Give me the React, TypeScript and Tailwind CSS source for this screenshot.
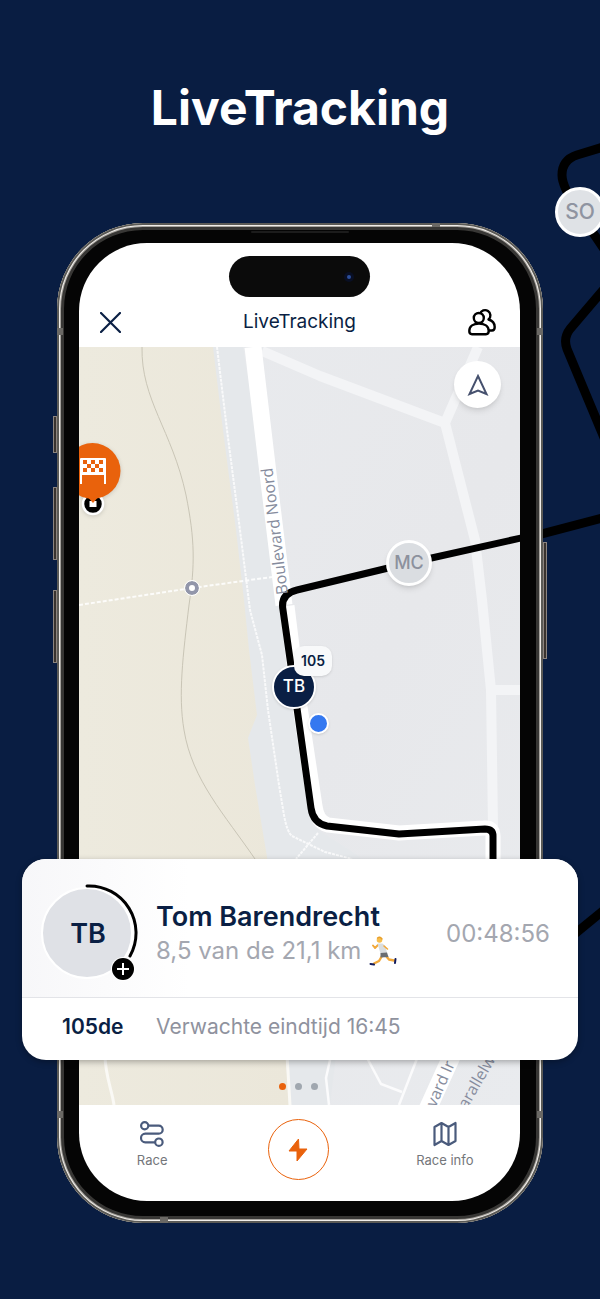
import React from "react";

const font = 'font-[Inter,"Liberation_Sans",sans-serif]';

function CourseBackdrop() {
  return (
    <svg
      aria-hidden="true"
      className="pointer-events-none absolute right-0 top-0 h-[1299px] w-[60px]"
      viewBox="540 0 60 1299"
      fill="none"
      stroke="#000"
      strokeWidth="9"
      strokeLinejoin="round"
    >
      <path d="M610 145 L577 155 Q562 160 562 175 Q562 187 579 212 L610 258" />
      <path d="M610 282 L570 329 Q563 338 567 349 L610 452" />
      <path d="M530 537 L610 516" />
      <path d="M560 946 L610 905" />
    </svg>
  );
}

function MapCanvas() {
  return (
    <svg
      aria-hidden="true"
      className="absolute inset-0 h-full w-full"
      viewBox="79 347 441 758"
      preserveAspectRatio="xMidYMid slice"
      fill="none"
    >
      <defs>
        <linearGradient id="land" x1="0" y1="0" x2="1" y2="1">
          <stop offset="0" stopColor="#e9ebee" />
          <stop offset="0.55" stopColor="#e7e8eb" />
          <stop offset="1" stopColor="#e9ebee" />
        </linearGradient>
        <linearGradient id="sand" x1="0" y1="0" x2="1" y2="0">
          <stop offset="0" stopColor="#edeade" />
          <stop offset="1" stopColor="#ebe7da" />
        </linearGradient>
      </defs>
      <rect x="79" y="347" width="441" height="758" fill="url(#land)" />
      <path d="M213 347 L243 347 L284 600 L312 826 L360 857 L330 1105 L280 1105 L200 700Z" fill="#e5e8eb" />
      <path d="M79 347 H213 L223 430 L236 530 L244 600 L249 650 L257 715 L248 738 L255 785 L267 857 L286 1060 L289 1105 H79Z" fill="url(#sand)" />
      <path d="M142 347 C141 400 172 430 186 495 C195 540 195 565 189 605 C183 655 178 695 184 730 C192 780 225 815 255 859" stroke="#c9c5b6" />
      <path d="M79 605 L192 588 L272 577" stroke="#fff" strokeWidth="2" strokeDasharray="4 2" opacity="0.85" />
      <path d="M217 347 L227 430 L240 530 L250 610 L262 655 L268 710 L279 785 L284 815 Q287 832 292 836 L325 852 L352 859 M318 833 L296 859" stroke="#fff" strokeWidth="2" strokeDasharray="3 1" opacity="0.75" />
      <path d="M262 351 L320 376 L445 423 L478 347 M445 423 L475 540 L482 600 L491 690 L493 826 M491 690 H520" stroke="#f3f4f6" strokeWidth="10" strokeLinejoin="round" />
      <path d="M253 347 L270 490 L284 605" stroke="#fff" strokeWidth="17" />
      <path d="M287 606 L297 687 L315 806 Q317 822 328 825 L399 833 L484 828 Q493 827 493 836 V862" stroke="#fff" strokeWidth="15" strokeLinejoin="round" />
      <path d="M530 536 L409 563 L297 590 Q280 594 283 610 L294 687 L311 808 Q313 823 327 826 L399 834 L485 829 Q493 829 493 836 V870" stroke="#000" strokeWidth="7" strokeLinejoin="round" />
      <path d="M105 1055 C105 1075 112 1090 114 1105 M287 1055 L290 1105" stroke="#faf9f5" strokeWidth="3" />
      <path d="M330 1060 L326 1078 L329 1105 M366 1056 L381 1084 L402 1092 M418 1056 L399 1105" stroke="#fbfbfc" strokeWidth="2.5" />
      <path d="M459 1040 L425 1115" stroke="#fff" strokeWidth="18" />
      <g fontFamily='"Open Sans", "Noto Sans", sans-serif' fontWeight="500" fill="#868c9d">
        <text transform="translate(288 594) rotate(-97)" fontSize="16">Boulevard Noord</text>
        <text transform="translate(418 1147) rotate(-66)" fontSize="16">Boulevard Ir</text>
        <text transform="translate(462 1118) rotate(-60)" fontSize="16">Parallelweg</text>
      </g>
      <circle cx="192" cy="588" r="5" fill="#fff" stroke="#9296aa" strokeWidth="4" />
      <circle cx="192" cy="588" r="7.5" stroke="#fff" />
    </svg>
  );
}

function FinishPin() {
  const cells = [0, 1, 2, 3, 4].flatMap((c) => [0, 1, 2].map((r) => [c, r])).filter(([c, r]) => (c + r) % 2 === 0);
  return (
    <svg role="img" aria-label="Finish" className="absolute left-[-18px] top-[92px] h-20 w-16 drop-shadow-sm" viewBox="61 439 64 80">
      <circle cx="93" cy="504" r="10" fill="#000" stroke="#fff" strokeWidth="2.5" />
      <rect x="89.5" y="501" width="7" height="6" fill="#fff" />
      <path d="M86 495 H100 L93 503Z" fill="#e9620c" />
      <circle cx="92.5" cy="471" r="28" fill="#e9620c" />
      <path d="M81 484 V459 M105 484 V459" fill="none" stroke="#fff" strokeWidth="2" />
      <rect x="80" y="458" width="26" height="17" rx="1" fill="#fff" />
      {cells.map(([c, r]) => (
        <rect key={`${c}-${r}`} x={83 + c * 4} y={460 + r * 4} width="4" height="4" fill="#e9620c" />
      ))}
    </svg>
  );
}

function RouteIcon() {
  return (
    <svg aria-hidden="true" className="h-[26px] w-6" viewBox="0 0 24 26" fill="none" stroke="#4a5b7c" strokeWidth="2.2">
      <circle cx="4.7" cy="4.7" r="3.6" />
      <path d="M8.5 4.7H18.7a4 4 0 0 1 0 8H5.3a4.3 4.3 0 0 0 0 8.6H15" />
      <circle cx="18.9" cy="21.2" r="3.7" />
    </svg>
  );
}

function FoldedMapIcon() {
  return (
    <svg aria-hidden="true" className="h-[26px] w-6" viewBox="0 0 24 26" fill="none" stroke="#4a5b7c" strokeWidth="2.2" strokeLinejoin="round">
      <path d="M1.5 6 L8.5 2 L15.5 6 L22.5 2 V20 L15.5 24 L8.5 20 L1.5 24Z M8.5 2V20 M15.5 6V24" />
    </svg>
  );
}

function PeopleIcon() {
  return (
    <svg aria-hidden="true" className="h-7 w-7" viewBox="0 0 28 28" fill="none" stroke="#000" strokeWidth="2.4" strokeLinejoin="round" strokeLinecap="round">
      <path d="M12 6 A5.3 5.3 0 1 1 20.5 11.5 C24 12.5 26.7 15 26.7 19 Q26.7 22.5 24 22.5 H21" />
      <circle cx="10.8" cy="10" r="5" fill="#fff" />
      <path d="M1.3 23 C1.3 18 5.5 15.6 11 15.6 S20.7 18 20.7 23 Q20.7 26.2 18 26.2 H4 Q1.3 26.2 1.3 23Z" fill="#fff" />
    </svg>
  );
}

function Runner() {
  return (
    <svg role="img" aria-label="Hardloper" className="h-[30px] w-7" viewBox="0 0 28 30" fill="none" strokeLinecap="round" strokeLinejoin="round">
      <path d="M9 9 L6 12 L4 9.5" stroke="#f2a93b" strokeWidth="2" />
      <path d="M13 20 L10 25 L5 27.5 M17 20 L20 23.5 L25 24.5" stroke="#f2a93b" strokeWidth="2.4" />
      <path d="M8.5 7.5 L13.5 7.5 L16.5 10 L18 17 L11.5 17.5Z" fill="#d9dde0" />
      <path d="M15 10 L18.5 13" stroke="#f2a93b" strokeWidth="1.6" />
      <path d="M11.5 17 L18 16.5 L19.5 21 L11.5 21.5Z" fill="#6a6d72" />
      <circle cx="10.5" cy="4" r="2.8" fill="#f7bd4c" />
      <path d="M8.5 2 Q11 0 13 3" stroke="#e8a02c" strokeWidth="1.4" />
      <path d="M1.5 28 L5 28.5 M26.5 23 L26 27" stroke="#101a5c" strokeWidth="2" />
    </svg>
  );
}

function RunnerCard() {
  return (
    <article className="absolute inset-x-[-35px] bottom-[163px] z-10 overflow-hidden rounded-3xl bg-white shadow-[0_2px_6px_rgba(0,0,0,0.3)]">
      <div className="flex h-[139px] items-center border-b border-[#e3e4e8] bg-linear-to-r from-[#f7f7f9] to-white to-30% pl-4 pr-7 pt-3">
        <div className="relative mr-[18px] size-[100px] shrink-0">
          <svg aria-hidden="true" className="absolute inset-0 size-full" viewBox="0 0 100 100" fill="none">
            <circle cx="49" cy="49" r="45" fill="#dfe1e6" stroke="#fff" strokeWidth="2" />
            <path d="M49 2 A47 47 0 0 1 92 72" stroke="#000" strokeWidth="3" strokeLinecap="round" />
          </svg>
          <span className="relative flex size-full items-center justify-center text-[27px] font-semibold">TB</span>
          <button aria-label="Volgen" className="absolute bottom-1 right-1 flex size-[22px] items-center justify-center rounded-full bg-black ring-1 ring-white">
            <svg aria-hidden="true" className="size-3" viewBox="0 0 12 12" stroke="#fff" strokeWidth="2"><path d="M6 0V12M0 6H12" /></svg>
          </button>
        </div>
        <div className="min-w-0 flex-1 whitespace-nowrap">
          <h2 className="text-[27px] font-semibold leading-[34px]">Tom Barendrecht</h2>
          <p className="flex items-center gap-2 text-2xl leading-[34px] text-[#a4a7b0]">8,5 van de 21,1 km <Runner /></p>
        </div>
        <time className="text-2xl text-[#a4a7b0]">00:48:56</time>
      </div>
      <div className="flex h-[62px] items-center pb-1">
        <strong className="w-[134px] pl-10 text-[21px] font-semibold">105de</strong>
        <p className="text-[21px] text-[#8f929e]">Verwachte eindtijd 16:45</p>
      </div>
    </article>
  );
}

function PhoneHardware() {
  return (
    <div aria-hidden="true" className="pointer-events-none absolute inset-y-0 -inset-x-1 flex justify-between">
      <div className="flex">
        <div className="flex w-1 flex-col gap-[30px] pt-[193px]">
          <span className="h-[37px] border border-[#8d8580] bg-[#39332f]" />
          <span className="mt-1 h-[73px] border border-[#8d8580] bg-[#39332f]" />
          <span className="h-[73px] border border-[#8d8580] bg-[#39332f]" />
        </div>
        <div className="flex w-1.5 flex-col justify-between py-[105px]">
          <span className="h-[7px] bg-[#6b6965]" />
          <span className="h-[7px] bg-[#6b6965]" />
        </div>
      </div>
      <div className="flex flex-1 flex-col justify-between px-[97px]">
        <span className="h-1 w-2 self-end bg-[#6b6965]" />
        <span className="h-1.5 w-2 self-start bg-[#6b6965]" />
      </div>
      <div className="flex">
        <div className="flex w-1.5 flex-col justify-between py-[105px]">
          <span className="h-[7px] bg-[#6b6965]" />
          <span className="h-[7px] bg-[#6b6965]" />
        </div>
        <div className="flex w-1 flex-col pt-[319px]">
          <span className="h-[117px] border border-[#8d8580] bg-[#39332f]" />
        </div>
      </div>
    </div>
  );
}

export default function App() {
  return (
    <main className={`${font} relative min-h-[1299px] overflow-hidden bg-[#091d42] px-[57px] pb-[76px] text-[#0a1f44]`}>
      <CourseBackdrop />
      <div className="absolute right-[-5px] top-[187px] flex size-[50px] items-center justify-center rounded-full border-[3px] border-white bg-[#dfe2e6] text-[21px] font-medium text-[#8f94a1]">SO</div>
      <h1 className="flex h-[223px] items-center justify-center pb-2 text-5xl font-bold text-white">LiveTracking</h1>
      <div className="relative mx-auto max-w-[486px]">
        <div className="rounded-[86px] bg-[#050505] pb-[22px] pl-[22px] pr-[23px] pt-2 shadow-[inset_0_0_0_2px_#5b5a56,inset_0_0_0_3px_#f1eeea,inset_0_0_0_4px_#a5a29d,inset_0_0_0_7px_#383735]">
          <div aria-hidden="true" className="mx-auto mb-2.5 h-0.5 w-[98px] rounded-full bg-[#1c1c1c]" />
          <section className="overflow-hidden rounded-[68px] bg-white">
            <header className="h-[104px] pt-[13px]">
              <div aria-hidden="true" className="mx-auto flex h-[41px] w-[141px] items-center justify-end rounded-full bg-[#0b0b0b] pr-4">
                <span className="flex size-2.5 items-center justify-center rounded-full bg-[#090f24]"><span className="size-1 rounded-full bg-[#2c4f9b]" /></span>
              </div>
              <div className="mt-2.5 flex h-[30px] items-center justify-between pl-5 pr-6">
                <button aria-label="Sluiten" className="flex h-7 w-8 items-center pl-px">
                  <svg aria-hidden="true" className="size-[21px]" viewBox="0 0 21 21" stroke="#0a1f44" strokeWidth="2.2" strokeLinecap="round"><path d="M1 1L20 20M20 1L1 20" /></svg>
                </button>
                <h2 className="text-[19px]">LiveTracking</h2>
                <button aria-label="Deelnemers"><PeopleIcon /></button>
              </div>
            </header>
            <div className="relative h-[758px] overflow-hidden">
              <MapCanvas />
              <FinishPin />
              <button aria-label="Mijn locatie" className="absolute right-[19px] top-[14px] flex size-[47px] items-center justify-center rounded-full bg-white shadow-md">
                <svg aria-hidden="true" className="size-[22px]" viewBox="0 0 22 22" fill="none" stroke="#46516e" strokeWidth="2"><path d="M11 2L19.5 20L11 16.5L2.5 20Z" /></svg>
              </button>
              <div className="absolute left-[307px] top-[193px] flex size-[46px] items-center justify-center rounded-full border-[3px] border-white bg-[#dadde1] text-lg font-medium text-[#8c919d] shadow-md">MC</div>
              <div className="absolute left-[193px] top-[318px] flex size-11 items-center justify-center rounded-full border-2 border-white bg-[#0a1f44] text-[17px] font-medium text-white shadow">TB</div>
              <div className="absolute left-[215px] top-[299px] flex h-[30px] w-[38px] items-center justify-center rounded-[10px] bg-[#f8f9fa] text-sm font-semibold shadow">105</div>
              <span className="absolute left-[229px] top-[366px] size-[21px] rounded-full border-2 border-white bg-[#3478f0] shadow" />
              <div aria-hidden="true" className="absolute inset-x-0 bottom-[15px] flex justify-center gap-[9px] pr-0.5">
                <span className="size-[7px] rounded-full bg-[#e9620c]" />
                <span className="size-[7px] rounded-full bg-[#a0a7af]" />
                <span className="size-[7px] rounded-full bg-[#a0a7af]" />
              </div>
            </div>
            <nav className="grid h-24 grid-cols-3 justify-items-center pr-0.5 text-[13px] text-[#74767a]">
              <a href="#race" className="flex flex-col items-center gap-1 pt-4"><RouteIcon />Race</a>
              <a href="#live" aria-label="Live" className="mt-3.5 flex size-[61px] items-center justify-center rounded-full border border-[#e9620c]">
                <svg aria-hidden="true" className="h-6 w-5" viewBox="0 0 20 24" fill="#e9620c" stroke="#e9620c" strokeLinejoin="round"><path d="M10.5 1L1 13H9V23L19 11H11Z" /></svg>
              </a>
              <a href="#info" className="flex flex-col items-center gap-1 pt-4"><FoldedMapIcon />Race info</a>
            </nav>
          </section>
        </div>
        <PhoneHardware />
        <RunnerCard />
      </div>
    </main>
  );
}
